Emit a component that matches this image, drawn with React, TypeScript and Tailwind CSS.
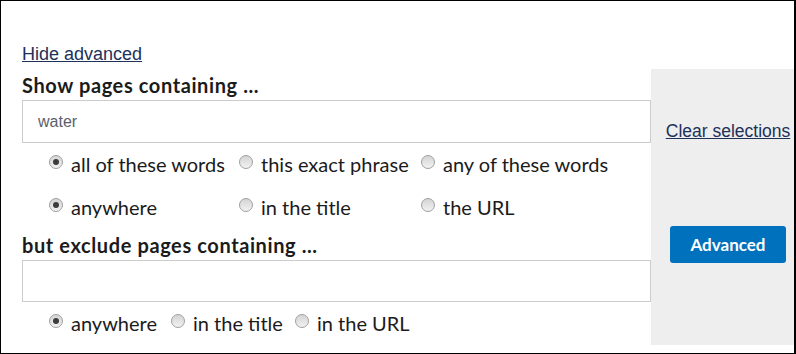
import React from 'react';

type Option = { label: string; checked?: boolean };

function Radio({ checked }: { checked?: boolean }) {
  return (
    <span className="mb-[4px] flex h-[14px] w-[14px] shrink-0 items-center justify-center rounded-full border border-[#a0a0a0] bg-linear-to-b from-[#d4d4d4] to-[#f2f2f2]">
      {checked && <span className="h-[6px] w-[6px] rounded-full bg-[#3c3c3c]" />}
    </span>
  );
}

function RadioItem({ label, checked }: Option) {
  return (
    <label className="flex items-center">
      <Radio checked={checked} />
      <span className="ml-[8px] whitespace-nowrap">{label}</span>
    </label>
  );
}

const matchWords: Option[] = [
  { label: 'all of these words', checked: true },
  { label: 'this exact phrase' },
  { label: 'any of these words' },
];

const matchWhere: Option[] = [
  { label: 'anywhere', checked: true },
  { label: 'in the title' },
  { label: 'the URL' },
];

const excludeWhere: Option[] = [
  { label: 'anywhere', checked: true },
  { label: 'in the title' },
  { label: 'in the URL' },
];

export default function App() {
  return (
    <div className="flex h-[354px] w-[796px] border border-r-2 border-black bg-white font-['Lato',sans-serif] text-[20px] leading-[24px] text-[#1b1b1b]">
      {/* left: search form */}
      <div className="w-[650px] shrink-0 pl-[21px] pt-[43px]">
        <a
          href="#"
          className="block font-['Liberation_Sans',Arial,sans-serif] text-[18px] leading-[21px] text-[#1d3159] underline"
        >
          Hide advanced
        </a>
        <h2 className="mt-[8px] font-bold tracking-[0.6px]">Show pages containing ...</h2>
        <div className="mt-[3px] flex h-[43px] items-center border border-[#cccccc] pl-[15px] font-['Liberation_Sans',Arial,sans-serif] text-[16px] text-[#5b616b]">
          water
        </div>

        <div className="ml-[27px] grid h-[42px] grid-cols-[190px_182px_auto] items-center">
          {matchWords.map((o) => (
            <RadioItem key={o.label} {...o} />
          ))}
        </div>
        <div className="ml-[27px] grid h-[44px] grid-cols-[190px_182px_auto] items-center">
          {matchWhere.map((o) => (
            <RadioItem key={o.label} {...o} />
          ))}
        </div>

        <h2 className="mt-[4px] font-bold tracking-[0.6px]">but exclude pages containing ...</h2>
        <div className="mt-[3px] h-[42px] border border-[#cccccc]" />

        <div className="ml-[27px] grid h-[42px] grid-cols-[122px_124px_auto] items-center">
          {excludeWhere.map((o) => (
            <RadioItem key={o.label} {...o} />
          ))}
        </div>
      </div>

      {/* right: actions */}
      <div className="mb-[8px] mt-[68px] flex flex-1 flex-col items-center bg-[#eeeeee] pl-[11px]">
        <a
          href="#"
          className="mt-[53px] font-['Liberation_Sans',Arial,sans-serif] text-[17.5px] leading-[18px] text-[#1d3159] underline"
        >
          Clear selections
        </a>
        <button className="mt-[86px] h-[37px] w-[116px] rounded-[3px] bg-[#0071bc] text-[17px] font-bold text-white">
          Advanced
        </button>
      </div>
    </div>
  );
}
